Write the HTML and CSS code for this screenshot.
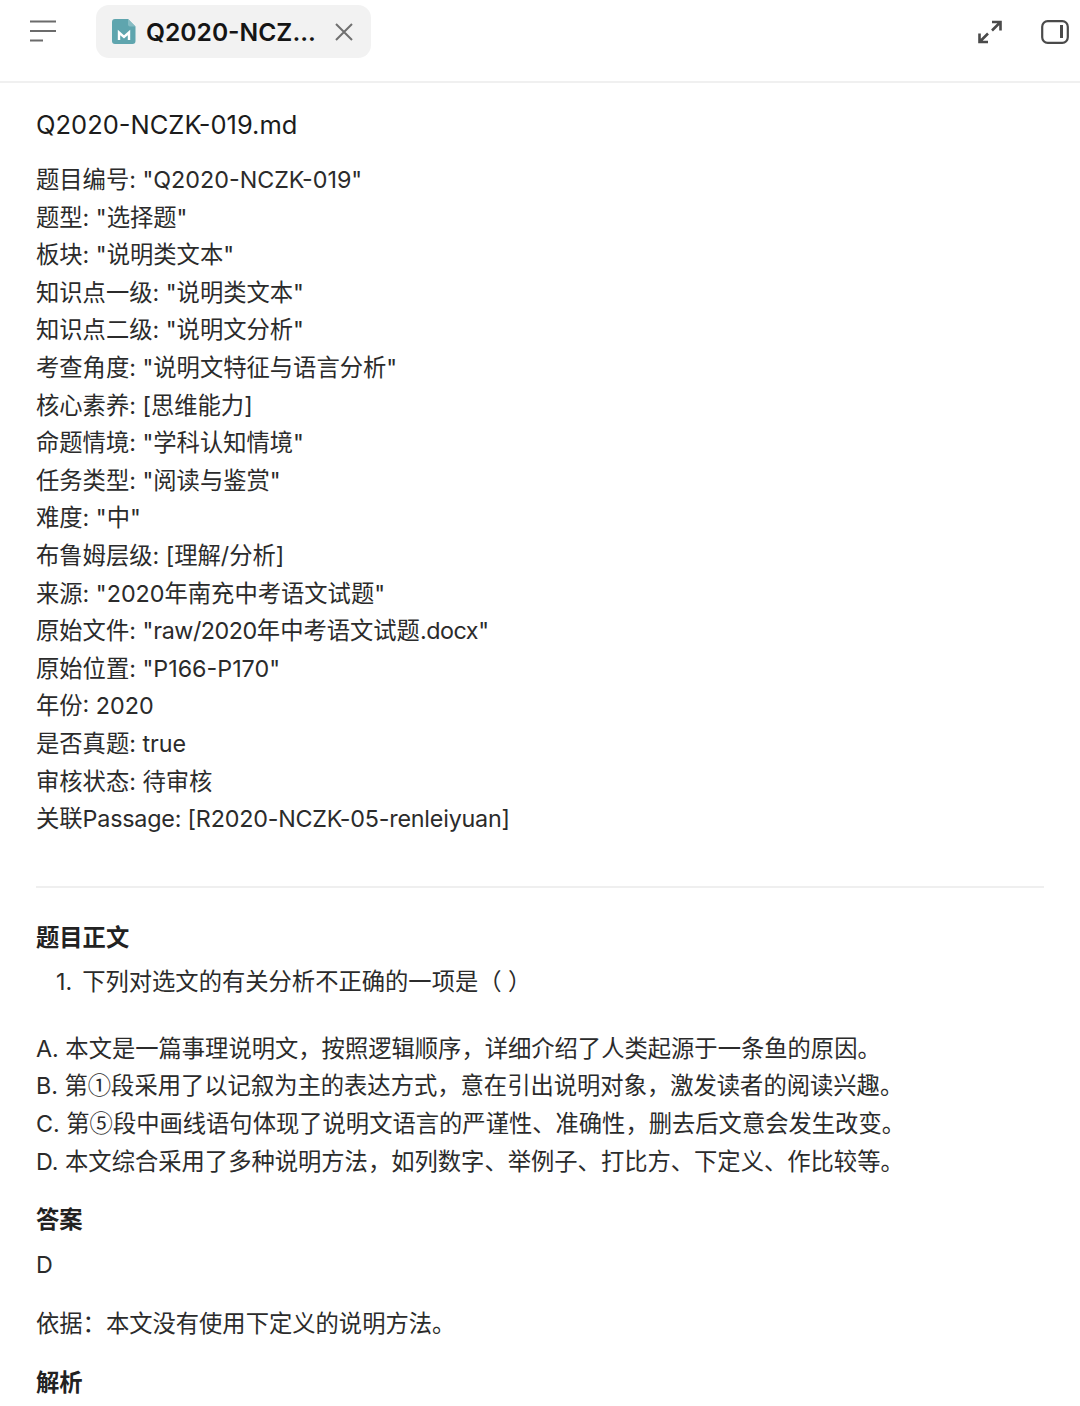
FILE: index.html
```html
<!DOCTYPE html>
<html>
<head>
  <title>Q2020-NCZK-019.md</title>
  <link rel="stylesheet" href="styles.css">
</head>
<body>
  <div class="topbar">
    <svg class="menu-icon" width="28" height="24" viewBox="0 0 28 24" fill="none" stroke="#6b6b6b" stroke-width="2.2">
      <path d="M1 2.5H27M1 12H27M1 21.5H14"/>
    </svg>
    <div class="tab">
      <svg class="file-icon" width="24" height="25" viewBox="0 0 24 25">
        <path d="M3 0H16L23.5 7.5V22a3 3 0 0 1-3 3H3a3 3 0 0 1-3-3V3a3 3 0 0 1 3-3Z" fill="#5fa5ae"/>
        <path d="M16 0L23.5 7.5H18a2 2 0 0 1-2-2Z" fill="#86bcc3"/>
        <path d="M7 21V13.500L12 18L17 13.500V21" fill="none" stroke="#fff" stroke-width="2.400"/>
      </svg>
      <span class="tab-title">Q2020-NCZ...</span>
      <svg class="close-icon" width="20" height="20" viewBox="0 0 20 20" fill="none" stroke="#707070" stroke-width="2">
        <path d="M2 2L18 18M18 2L2 18"/>
      </svg>
    </div>
    <div class="topbar-right">
      <svg width="24" height="24" viewBox="0 0 24 24" fill="none" stroke="#4a4a4a" stroke-width="2.6">
        <path d="M14 2H22.500V10.500M22.500 2L14 10.500M1.500 13.500V22H10M1.500 22L10 13.500"/>
      </svg>
      <svg width="28" height="24" viewBox="0 0 28 24" fill="none" stroke="#4a4a4a" stroke-width="2.2">
        <rect x="1.200" y="1.200" width="25.600" height="21.600" rx="5.500"/>
        <path d="M20.500 5V18" stroke-width="3"/>
      </svg>
    </div>
  </div>

  <div class="content">
    <h1>Q2020-NCZK-019.md</h1>
    <div class="meta">
      <p>题目编号: "Q2020-NCZK-019"</p>
      <p>题型: "选择题"</p>
      <p>板块: "说明类文本"</p>
      <p>知识点一级: "说明类文本"</p>
      <p>知识点二级: "说明文分析"</p>
      <p>考查角度: "说明文特征与语言分析"</p>
      <p>核心素养: [思维能力]</p>
      <p>命题情境: "学科认知情境"</p>
      <p>任务类型: "阅读与鉴赏"</p>
      <p>难度: "中"</p>
      <p>布鲁姆层级: [理解/分析]</p>
      <p>来源: "2020年南充中考语文试题"</p>
      <p>原始文件: "<span class="tight-more">raw/2020</span>年中考语文试题<span class="tight-more">.docx</span>"</p>
      <p>原始位置: "P166-P170"</p>
      <p>年份: 2020</p>
      <p>是否真题: true</p>
      <p>审核状态: 待审核</p>
      <p>关联<span class="tight">Passage: [R2020-NCZK-05-renleiyuan]</span></p>
    </div>
    <hr>
    <h2>题目正文</h2>
    <div class="question">
      <span>1.</span>
      <span>下列对选文的有关分析不正确的一项是（ ）</span>
    </div>
    <div class="options">
      <p>A. 本文是一篇事理说明文，按照逻辑顺序，详细介绍了人类起源于一条鱼的原因。</p>
      <p>B. 第<span class="cjk">①</span>段采用了以记叙为主的表达方式，意在引出说明对象，激发读者的阅读兴趣。</p>
      <p>C. 第<span class="cjk">⑤</span>段中画线语句体现了说明文语言的严谨性、准确性，删去后文意会发生改变。</p>
      <p>D. 本文综合采用了多种说明方法，如列数字、举例子、打比方、下定义、作比较等。</p>
    </div>
    <h2 class="answer-head">答案</h2>
    <p class="answer">D</p>
    <p class="basis">依据：本文没有使用下定义的说明方法。</p>
    <h2 class="analysis-head">解析</h2>
  </div>
</body>
</html>
```

FILE: styles.css
```css
html, body {
  margin: 0;
  height: 1406px;
  overflow: hidden;
  background-color: #fff;
}

body {
  font-family: Inter, "Noto Sans CJK SC", sans-serif;
  font-size: 23.3px;
  line-height: 37.6px;
  color: #2b2b2b;
}

p {
  margin: 0;
}

.cjk {
  font-family: "Noto Sans CJK SC", sans-serif;
  line-height: 1;
}

.tight {
  letter-spacing: -0.2px;
}

.tight-more {
  letter-spacing: -0.45px;
}

.topbar {
  display: flex;
  align-items: center;
  height: 81px;
  border-bottom: 2px solid #f0f0f0;
  padding: 0 11px 0 29px;
}

.menu-icon {
  margin-top: -20px;
}

.tab {
  display: flex;
  align-items: center;
  width: 275px;
  height: 53px;
  margin: -18px 0 0 39px;
  padding-left: 16px;
  box-sizing: border-box;
  background-color: #f2f2f2;
  border-radius: 13px;
}

.file-icon {
  margin-right: 10px;
}

.tab-title {
  margin-top: 2px;
  font-size: 24.6px;
  font-weight: 600;
  color: #151515;
  white-space: nowrap;
}

.close-icon {
  margin: 1px 0 0 18px;
}

.topbar-right {
  display: flex;
  align-items: center;
  gap: 39px;
  margin: -18px 0 0 auto;
}

.content {
  padding: 23px 36px 0;
}

h1 {
  margin: 0 0 17px;
  font-size: 25.5px;
  font-weight: 400;
  line-height: 38px;
  color: #1c1c1c;
}

hr {
  margin: 48px 0 31px;
  border: none;
  border-top: 2px solid #efefef;
}

h2 {
  margin: 0;
  font-size: 23.3px;
  font-weight: 700;
  line-height: 37.6px;
  color: #222;
}

.question {
  display: flex;
  gap: 10px;
  margin: 7px 0 29px 20px;
}

.answer-head {
  margin-top: 21px;
}

.answer {
  margin-top: 7px;
}

.basis {
  margin-top: 22px;
}

.analysis-head {
  margin-top: 21px;
}
```
